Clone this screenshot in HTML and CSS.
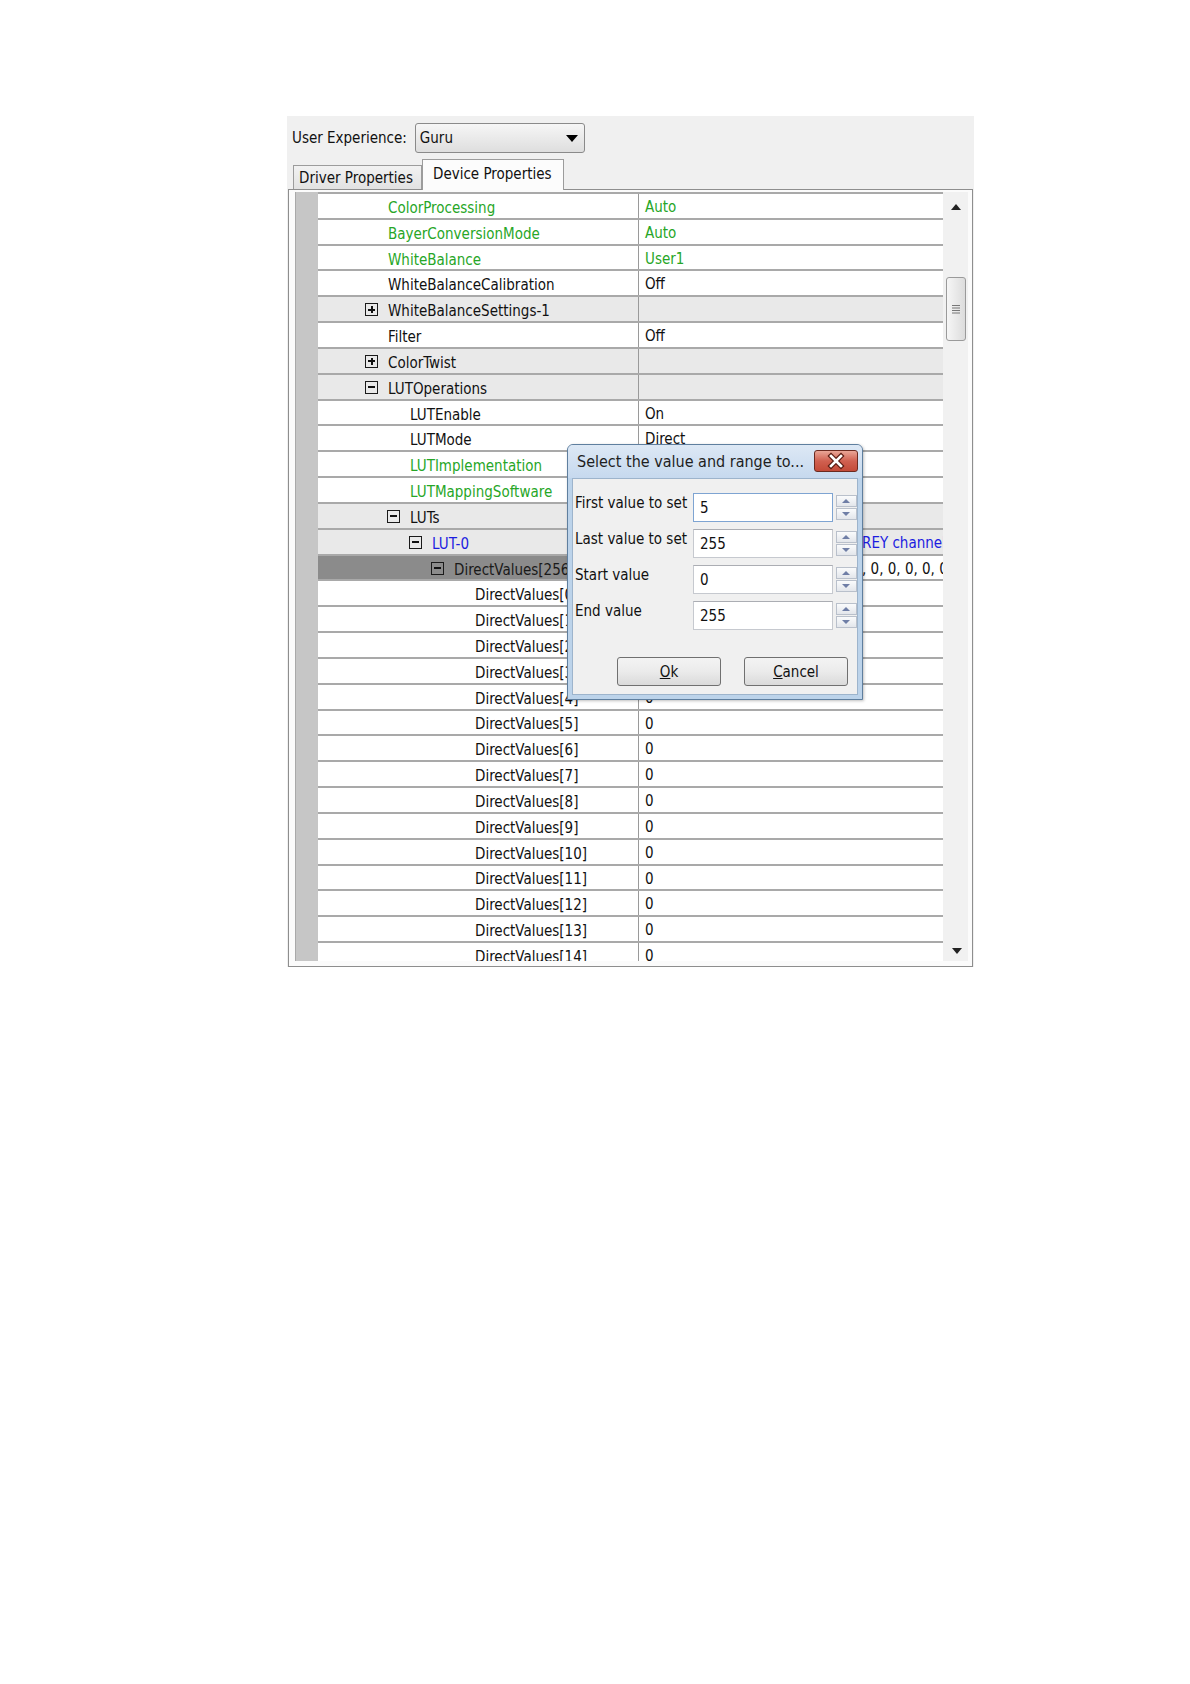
FILE: index.html
```html
<!DOCTYPE html>
<html lang="en">
<head>
    <meta charset="UTF-8">
    <title>Device Properties</title>
    <link rel="stylesheet" href="styles.css">
</head>
<body>
    <div class="app">
        <div class="toolbar">
            <span class="tb-label">User Experience:</span>
            <div class="combo">
                <span>Guru</span>
                <svg class="combo-arrow" width="12" height="7" viewBox="0 0 12 7"><path d="M0 0 H12 L6 7 Z" fill="#000"/></svg>
            </div>
        </div>

        <div class="tabs">
            <div class="tab">Driver Properties</div>
            <div class="tab active">Device Properties</div>
        </div>

        <div class="panel">
            <div class="inner">
                <div class="gutter"></div>
                <div class="grid">
                    <div class="row"><div class="name lv0 green"><i class="exp"></i>ColorProcessing</div><div class="val green">Auto</div></div>
                    <div class="row"><div class="name lv0 green"><i class="exp"></i>BayerConversionMode</div><div class="val green">Auto</div></div>
                    <div class="row"><div class="name lv0 green"><i class="exp"></i>WhiteBalance</div><div class="val green">User1</div></div>
                    <div class="row"><div class="name lv0"><i class="exp"></i>WhiteBalanceCalibration</div><div class="val">Off</div></div>
                    <div class="row group"><div class="name lv0"><i class="exp plus"></i>WhiteBalanceSettings-1</div><div class="val"></div></div>
                    <div class="row"><div class="name lv0"><i class="exp"></i>Filter</div><div class="val">Off</div></div>
                    <div class="row group"><div class="name lv0"><i class="exp plus"></i>ColorTwist</div><div class="val"></div></div>
                    <div class="row group"><div class="name lv0"><i class="exp minus"></i>LUTOperations</div><div class="val"></div></div>
                    <div class="row"><div class="name lv1"><i class="exp"></i>LUTEnable</div><div class="val">On</div></div>
                    <div class="row"><div class="name lv1"><i class="exp"></i>LUTMode</div><div class="val">Direct</div></div>
                    <div class="row"><div class="name lv1 green"><i class="exp"></i>LUTImplementation</div><div class="val green">Software</div></div>
                    <div class="row"><div class="name lv1 green"><i class="exp"></i>LUTMappingSoftware</div><div class="val green">8To8</div></div>
                    <div class="row group"><div class="name lv1"><i class="exp minus"></i>LUTs</div><div class="val"></div></div>
                    <div class="row group"><div class="name lv2 blue"><i class="exp minus"></i>LUT-0</div><div class="val blue"><span class="lead">LUT for the G</span>REY channel</div></div>
                    <div class="row selected"><div class="name lv3"><i class="exp minus"></i>DirectValues[256]</div><div class="val"><span class="lead">0, 0, 0, 0, 0, 0, 0, 0, 0, 0</span>, 0, 0, 0, 0, 0, 0, 0, 0</div></div>
                    <div class="row"><div class="name lv4">DirectValues[0]</div><div class="val">0</div></div>
                    <div class="row"><div class="name lv4">DirectValues[1]</div><div class="val">0</div></div>
                    <div class="row"><div class="name lv4">DirectValues[2]</div><div class="val">0</div></div>
                    <div class="row"><div class="name lv4">DirectValues[3]</div><div class="val">0</div></div>
                    <div class="row"><div class="name lv4">DirectValues[4]</div><div class="val">0</div></div>
                    <div class="row"><div class="name lv4">DirectValues[5]</div><div class="val">0</div></div>
                    <div class="row"><div class="name lv4">DirectValues[6]</div><div class="val">0</div></div>
                    <div class="row"><div class="name lv4">DirectValues[7]</div><div class="val">0</div></div>
                    <div class="row"><div class="name lv4">DirectValues[8]</div><div class="val">0</div></div>
                    <div class="row"><div class="name lv4">DirectValues[9]</div><div class="val">0</div></div>
                    <div class="row"><div class="name lv4">DirectValues[10]</div><div class="val">0</div></div>
                    <div class="row"><div class="name lv4">DirectValues[11]</div><div class="val">0</div></div>
                    <div class="row"><div class="name lv4">DirectValues[12]</div><div class="val">0</div></div>
                    <div class="row"><div class="name lv4">DirectValues[13]</div><div class="val">0</div></div>
                    <div class="row"><div class="name lv4">DirectValues[14]</div><div class="val">0</div></div>
                    <div class="row"><div class="name lv4">DirectValues[15]</div><div class="val">0</div></div>
                </div>
                <div class="vscroll">
                    <svg class="arrow-up" width="10" height="6" viewBox="0 0 10 6"><path d="M0 6 L5 0 L10 6 Z" fill="#222"/></svg>
                    <div class="thumb">
                        <svg width="8" height="10" viewBox="0 0 8 10"><path d="M0 1.5 H8 M0 4 H8 M0 6.5 H8 M0 9 H8" stroke="#777" stroke-width="1"/></svg>
                    </div>
                    <svg class="arrow-down" width="10" height="6" viewBox="0 0 10 6"><path d="M0 0 L10 0 L5 6 Z" fill="#222"/></svg>
                </div>
            </div>
        </div>

        <!-- modal on top of the grid -->
        <div class="dialog">
            <div class="dlg-title">
                <span>Select the value and range to...</span>
                <div class="dlg-close">
                    <svg width="44" height="22" viewBox="0 0 44 22">
                        <path d="M17 6 L27 16 M27 6 L17 16" stroke="#5a1c12" stroke-width="5" stroke-linecap="square"/>
                        <path d="M17 6 L27 16 M27 6 L17 16" stroke="#fff" stroke-width="2.6" stroke-linecap="square"/>
                    </svg>
                </div>
            </div>
            <div class="dlg-body">
                <div class="field">
                    <label>First value to set</label>
                    <div class="input focus">5</div>
                    <div class="spin"><b class="up"></b><b class="down"></b></div>
                </div>
                <div class="field">
                    <label>Last value to set</label>
                    <div class="input">255</div>
                    <div class="spin"><b class="up"></b><b class="down"></b></div>
                </div>
                <div class="field">
                    <label>Start value</label>
                    <div class="input">0</div>
                    <div class="spin"><b class="up"></b><b class="down"></b></div>
                </div>
                <div class="field">
                    <label>End value</label>
                    <div class="input">255</div>
                    <div class="spin"><b class="up"></b><b class="down"></b></div>
                </div>
                <div class="dlg-buttons">
                    <button class="btn"><u>O</u>k</button>
                    <button class="btn"><u>C</u>ancel</button>
                </div>
            </div>
        </div>
    </div>
</body>
</html>
```

FILE: styles.css
```css
body {
    margin: 0;
    background: #fff;
    font-family: "DejaVu Sans Condensed", "DejaVu Sans", sans-serif;
    font-size: 15px;
    color: #111;
}

.app {
    position: relative;
    margin: 116px 0 0 287px;
    width: 687px;
    background: #f0f0f0;
}

.toolbar {
    height: 44px;
    display: flex;
    align-items: center;
    padding-left: 5px;
}

.tb-label {
    margin-right: 8px;
}

.combo {
    box-sizing: border-box;
    width: 170px;
    height: 30px;
    border: 1px solid #8a8a8a;
    border-radius: 3px;
    background: linear-gradient(#f6f6f6, #dedede);
    display: flex;
    align-items: center;
    justify-content: space-between;
    padding: 0 6px 0 4px;
}

.tabs {
    height: 29px;
    display: flex;
    align-items: flex-end;
    padding-left: 6px;
}

.tab {
    height: 24px;
    width: 129px;
    box-sizing: border-box;
    border: 1px solid #9c9c9c;
    border-bottom: none;
    background: linear-gradient(#f2f2f2, #e2e2e2);
    padding: 3px 0 0 5px;
    white-space: nowrap;
}

.tab.active {
    height: 31px;
    width: 142px;
    margin-bottom: -1px;
    background: #fcfcfc;
    padding: 5px 0 0 10px;
    position: relative;
    z-index: 1;
}

.panel {
    margin-left: 1px;
    width: 685px;
    height: 778px;
    box-sizing: border-box;
    border: 1px solid #8e8e8e;
    background: #fbfbfb;
    padding: 2px 4px 5px 6px;
}

.inner {
    display: flex;
    height: 100%;
    overflow: hidden;
}

.gutter {
    width: 23px;
    flex: none;
    background: #c6c6c6;
    border-left: 1px solid #a9a9a9;
    box-sizing: border-box;
}

.grid {
    width: 625px;
    flex: none;
    border-top: 2px solid #a9a9a9;
    overflow: hidden;
}

.row {
    display: flex;
    height: 25.83px;
    box-sizing: border-box;
    border-bottom: 2px solid #a9a9a9;
    background: #fff;
    white-space: nowrap;
}

.row.group {
    background: #e9e9e9;
}

.name {
    width: 321px;
    flex: none;
    box-sizing: border-box;
    border-right: 1px solid #9a9a9a;
    display: flex;
    align-items: center;
    padding-top: 4px;
    overflow: hidden;
}

.val {
    flex: 1;
    min-width: 0;
    padding-left: 6px;
    line-height: 27px;
    overflow: hidden;
}

.row.selected .name {
    background: #8b8b8b;
    color: #1a1a1a;
}

.lv0 { padding-left: 47px; }
.lv1 { padding-left: 69px; }
.lv2 { padding-left: 91px; }
.lv3 { padding-left: 113px; }
.lv4 { padding-left: 157px; }

.exp {
    width: 13px;
    height: 13px;
    flex: none;
    margin: -3px 10px 0 0;
    box-sizing: border-box;
    position: relative;
}

.exp.plus, .exp.minus {
    border: 1px solid #1a1a1a;
}

.exp.plus::before, .exp.minus::before {
    content: "";
    position: absolute;
    left: 2px;
    top: 4.5px;
    width: 7px;
    height: 2px;
    background: #111;
}

.exp.plus::after {
    content: "";
    position: absolute;
    left: 4.5px;
    top: 2px;
    width: 2px;
    height: 7px;
    background: #111;
}

.green { color: #27a627; }
.blue { color: #1c1ce0; }

.lead {
    display: inline-block;
    width: 217px;
    text-align: right;
    overflow: hidden;
    vertical-align: top;
}

.vscroll {
    width: 25px;
    flex: none;
    position: relative;
    background: #f1f1f1;
}

.arrow-up {
    position: absolute;
    left: 8px;
    top: 12px;
}

.arrow-down {
    position: absolute;
    left: 9px;
    top: 756px;
}

.thumb {
    position: absolute;
    left: 3px;
    top: 85px;
    width: 20px;
    height: 64px;
    box-sizing: border-box;
    border: 1px solid #9a9a9a;
    border-radius: 3px;
    background: linear-gradient(90deg, #f6f6f6, #dcdcdc);
    display: flex;
    align-items: center;
    justify-content: center;
}

/* dialog */
.dialog {
    position: absolute;
    left: 280px;
    top: 328px;
    width: 296px;
    height: 256px;
    box-sizing: border-box;
    border: 1px solid #5f7f9f;
    border-radius: 6px 6px 0 0;
    background: #bcd3ea;
    padding: 0 4px 4px 4px;
    display: flex;
    flex-direction: column;
    box-shadow: 1px 1px 3px rgba(0,0,0,0.25);
    z-index: 5;
}

.dlg-title {
    height: 33px;
    flex: none;
    display: flex;
    align-items: center;
    justify-content: space-between;
    background: linear-gradient(#dde8f5, #c6d9ee);
    margin: 0 -4px;
    padding: 0 4px 0 9px;
    border-radius: 5px 5px 0 0;
    font-size: 16px;
    color: #1e1e1e;
    white-space: nowrap;
}

.dlg-close {
    width: 44px;
    height: 22px;
    flex: none;
    border: 1px solid #6b2a20;
    border-radius: 3px;
    background: linear-gradient(#e9a697, #d06050 50%, #c34a38);
    box-sizing: border-box;
    display: flex;
    align-items: center;
    justify-content: center;
    margin-top: -2px;
}

.dlg-close svg {
    margin: -1px;
}

.dlg-body {
    flex: 1;
    background: #f0f0f0;
    border: 1px solid #9db4cc;
    padding: 14px 0 0 2px;
}

.field {
    display: flex;
    height: 29px;
    margin-bottom: 7px;
    align-items: flex-start;
}

.field label {
    width: 118px;
    flex: none;
    font-size: 15px;
    line-height: 20px;
    white-space: nowrap;
}

.input {
    width: 142px;
    height: 29px;
    box-sizing: border-box;
    border: 1px solid #c6c9cf;
    border-top-color: #abadb3;
    background: #fff;
    padding: 5px 0 0 6px;
    font-size: 15px;
    line-height: 19px;
}

.input.focus {
    border-color: #7ea4d2;
}

.spin {
    margin-left: 3px;
    margin-top: 2px;
    width: 21px;
    display: flex;
    flex-direction: column;
    gap: 1px;
}

.spin b {
    height: 12px;
    box-sizing: border-box;
    border: 1px solid #b9c0cb;
    background: linear-gradient(#fafbfc, #e3e6eb);
    position: relative;
}

.spin b::after {
    content: "";
    position: absolute;
    left: 5px;
    top: 3px;
    border-left: 4px solid transparent;
    border-right: 4px solid transparent;
}

.spin .up::after {
    border-bottom: 4px solid #6f7ea6;
}

.spin .down::after {
    border-top: 4px solid #6f7ea6;
}

.dlg-buttons {
    display: flex;
    gap: 23px;
    padding: 20px 0 0 42px;
}

.btn {
    width: 104px;
    height: 29px;
    border: 1px solid #707070;
    border-radius: 3px;
    background: linear-gradient(#f3f3f3, #ebebeb 50%, #dadada);
    font-family: "DejaVu Sans Condensed", "DejaVu Sans", sans-serif;
    font-size: 15px;
    color: #111;
    padding: 0;
}
```
